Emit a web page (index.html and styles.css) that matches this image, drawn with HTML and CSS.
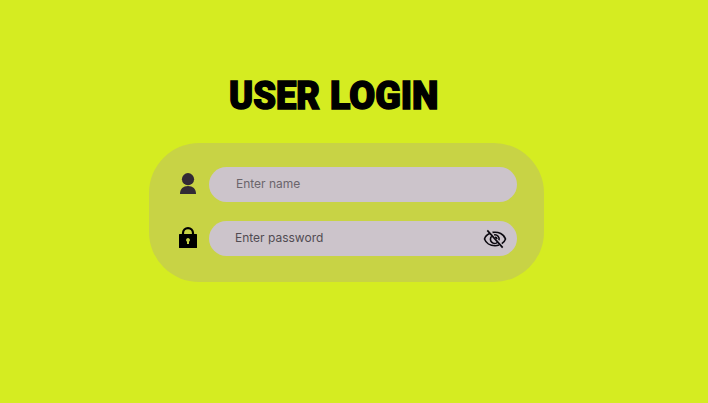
FILE: index.html
```html
<!DOCTYPE html>
<html lang="en">
<head>
<meta charset="utf-8">
<title>User Login</title>
<link rel="stylesheet" href="styles.css">
</head>
<body>
<main class="login">
  <h1 class="title">
    <svg class="title-art" width="208" height="40" viewBox="0 0 208 40">
      <text x="-1" y="33.8" textLength="91" lengthAdjust="spacingAndGlyphs">USER</text>
      <text x="100" y="33.8" textLength="108.5" lengthAdjust="spacingAndGlyphs">LOGIN</text>
    </svg>
  </h1>
  <form class="card">
    <label class="row">
      <svg class="icon" width="20" height="24" viewBox="0 0 20 24" fill="#332b35">
        <circle cx="10" cy="7.2" r="6.1"/>
        <path d="M2 22C2 17 5.2 14.1 10 14.1S18 17 18 22Z"/>
      </svg>
      <span class="field"><span class="hint">Enter name</span></span>
    </label>
    <label class="row">
      <svg class="icon" width="20" height="24" viewBox="0 0 20 24">
        <path d="M5 10V7.1a5 5 0 0 1 10 0V10" fill="none" stroke="#000" stroke-width="2.2"/>
        <rect x="1" y="8" width="18" height="14" rx=".5"/>
        <path d="M10 12a2 2 0 0 1 1 3.7V18H9v-2.3A2 2 0 0 1 10 12Z" fill="#c8d345"/>
      </svg>
      <span class="field password"><span class="hint">Enter password</span>
        <svg class="eye" width="24" height="24" viewBox="0 0 24 24" fill="none" stroke="#0c0910" stroke-width="1.6">
          <path d="M7 6.3C4.3 7.5 2.2 9.6 1.5 12c1.4 4 5.6 6.8 10.5 6.8 1.4 0 2.8-.2 4-.7M9.5 5.4c6-1 11.5 1.7 13 6.6-.6 1.9-1.9 3.5-3.7 4.7"/>
          <path d="M8.7 9.2a4.2 4.2 0 0 0 5.9 6M11.2 7.9a4.2 4.2 0 0 1 4.8 5.3M12 10.3a2 2 0 0 1 2 1.7"/>
          <path d="M4.3 3.4L19.7 20.6" stroke-width="1.7"/>
        </svg>
      </span>
    </label>
  </form>
</main>
</body>
</html>
```
FILE: styles.css
```css
* { box-sizing: border-box; }
body {
  margin: 0;
  min-height: 403px;
  background: #d5ec21;
  font-family: Inter, "Liberation Sans", sans-serif;
}
.login { width: 395px; margin-left: 149px; padding-top: 75px; }
.title { margin: 0 0 28px 81px; height: 40px; }
.title-art {
  display: block;
  overflow: visible;
  font: 900 39.5px Roboto, sans-serif;
  fill: #000;
  stroke: #000;
  stroke-width: 1.5px;
}
.card {
  display: flex;
  flex-direction: column;
  gap: 19px;
  height: 139px;
  padding: 24px 27px 0 29px;
  border-radius: 50px;
  background: #c8d345;
}
.row { display: flex; align-items: center; height: 35px; }
.icon { flex: none; margin: -1px 11px 0 0; }
.field {
  display: flex;
  align-items: center;
  justify-content: space-between;
  width: 308px;
  height: 35px;
  padding: 0 10px 0 27px;
  border-radius: 18px;
  background: #ccc4cb;
  color: #6b656b;
  font-size: 12px;
  line-height: 16px;
}
.password { padding-left: 26px; color: #514b52; }
.hint { margin-top: -2px; }
.eye { flex: none; }
```
